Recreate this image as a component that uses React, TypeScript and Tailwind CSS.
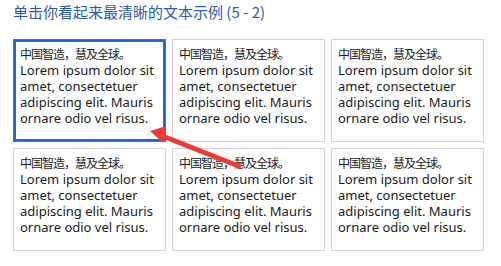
import type { ReactNode } from "react";

const sample = (
  <>
    <span className="text-[12px] tracking-[-1px] [font-family:'Noto_Sans_CJK_SC',sans-serif]">
      中国智造，慧及全球。
    </span>
    <br />
    Lorem ipsum dolor sit amet, consectetuer adipiscing elit. Mauris ornare odio vel risus.
  </>
);

function SampleBox({ selected, children }: { selected?: boolean; children: ReactNode }) {
  return (
    <div
      className={
        selected
          ? "h-[103px] w-[153px] border border-[#e8393a] bg-white shadow-[inset_0_0_0_2px_#2468c4] pl-[6px] pr-[4px] pt-[6px]"
          : "h-[103px] w-[153px] border border-[#d5d5d5] bg-white pl-[6px] pr-[4px] pt-[6px]"
      }
    >
      <p className="text-[13px] leading-[16px] text-[#1b1b1b] [font-family:'Noto_Sans','Noto_Sans_CJK_SC',sans-serif]">
        {children}
      </p>
    </div>
  );
}

export default function App() {
  return (
    <div className="relative h-[266px] w-[501px] overflow-hidden bg-white pl-[13px]">
      <h1 className="pt-[3px] text-[15px] leading-[18px] text-[#2b5ba8] [font-family:'Noto_Sans_CJK_SC',sans-serif]">
        单击你看起来最清晰的文本示例 (5 - 2)
      </h1>

      <div className="mt-[18px] grid w-[471px] grid-cols-[153px_153px_153px] gap-[6px]">
        <SampleBox selected>{sample}</SampleBox>
        <SampleBox>{sample}</SampleBox>
        <SampleBox>{sample}</SampleBox>
        <SampleBox>{sample}</SampleBox>
        <SampleBox>{sample}</SampleBox>
        <SampleBox>{sample}</SampleBox>
      </div>

      {/* red annotation arrow drawn over the boxes */}
      <svg className="pointer-events-none absolute left-0 top-0" width="501" height="266" viewBox="0 0 501 266">
        <line x1="241" y1="167" x2="160" y2="135" stroke="#f03a3a" strokeWidth="5" />
        <polygon points="150,131 166,126 163,143" fill="#f03a3a" />
      </svg>
    </div>
  );
}
